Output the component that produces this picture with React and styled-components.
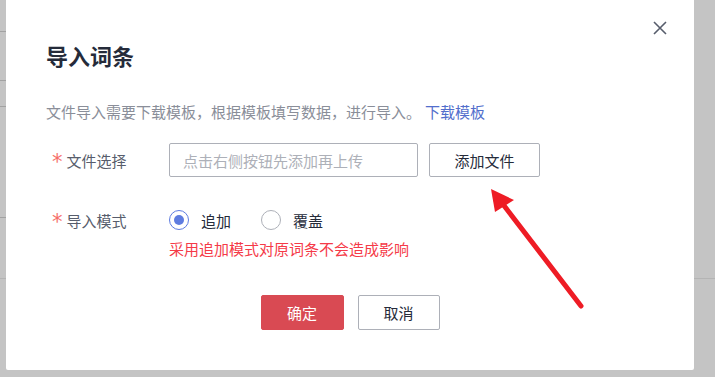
import React, { useState } from "react";
import styled, { createGlobalStyle } from "styled-components";

const Global = createGlobalStyle`
  html, body { margin: 0; padding: 0; }
  body {
    width: 715px;
    height: 377px;
    overflow: hidden;
    background: #c4c4c4;
    font-family: "Noto Sans CJK SC", "Noto Sans", sans-serif;
  }
`;

const Page = styled.div`
  position: relative;
  width: 715px;
  height: 377px;
  overflow: hidden;
  background: #c4c4c4;
`;

const Backdrop = styled.div`
  display: flex;
  flex-direction: column;
`;

const BackdropRow = styled.div`
  height: ${(p) => p.$h}px;
  box-sizing: border-box;
  border-bottom: 1px solid ${(p) => (p.$light ? "#b4b4b4" : "#a2a2a2")};
  width: ${(p) => (p.$wide ? "100%" : "20px")};
`;

const Dialog = styled.div`
  position: absolute;
  left: 6px;
  top: 0;
  width: 688px;
  height: 370px;
  background: #ffffff;
  border-radius: 0 0 2px 2px;
  box-sizing: border-box;
  padding: 40px 40px 0 40px;
  display: flex;
  flex-direction: column;
`;

const CloseButton = styled.button`
  position: absolute;
  top: 20px;
  right: 26px;
  width: 16px;
  height: 16px;
  padding: 0;
  border: none;
  background: transparent;
  display: flex;
  align-items: center;
  justify-content: center;
  cursor: pointer;
`;

const Title = styled.h2`
  margin: 0;
  font-size: 22px;
  line-height: 30px;
  font-weight: 700;
  color: #252b3a;
`;

const Desc = styled.p`
  margin: 31px 0 0 0;
  font-size: 15px;
  line-height: 22px;
  color: #8a8e99;
`;

const Link = styled.a`
  color: #526ecc;
  text-decoration: none;
  margin-left: 4px;
  cursor: pointer;
`;

const FormRow = styled.div`
  display: flex;
  align-items: center;
  margin-top: ${(p) => p.$mt}px;
  height: ${(p) => p.$h}px;
`;

const Label = styled.label`
  width: 123px;
  box-sizing: border-box;
  padding-left: 6px;
  display: flex;
  align-items: center;
  font-size: 15px;
  color: #575d6c;
  flex-shrink: 0;
`;

const Star = styled.span`
  color: #f66f6a;
  font-size: 21px;
  font-family: "DejaVu Sans", sans-serif;
  margin-right: 4px;
  line-height: 1;
  padding-top: 5px;
`;

const Input = styled.input`
  width: 249px;
  height: 34px;
  box-sizing: border-box;
  border: 1px solid #adb0b8;
  border-radius: 2px;
  padding: 0 13px;
  font-family: inherit;
  font-size: 15px;
  color: #252b3a;
  outline: none;
  &::placeholder { color: #adb0b8; }
`;

const Button = styled.button`
  height: ${(p) => p.$h || 34}px;
  width: ${(p) => p.$w}px;
  margin-left: ${(p) => p.$ml || 0}px;
  box-sizing: border-box;
  border-radius: 2px;
  font-family: inherit;
  font-size: 15px;
  cursor: pointer;
  padding: 0;
  border: 1px solid ${(p) => (p.$primary ? "#d94a53" : "#adb0b8")};
  background: ${(p) => (p.$primary ? "#d94a53" : "#ffffff")};
  color: ${(p) => (p.$primary ? "#ffffff" : "#252b3a")};
`;

const RadioGroup = styled.div`
  display: flex;
  align-items: center;
`;

const RadioItem = styled.label`
  display: flex;
  align-items: center;
  margin-right: 30px;
  font-size: 15px;
  color: #252b3a;
  cursor: pointer;
`;

const RadioCircle = styled.span`
  width: 20px;
  height: 20px;
  box-sizing: border-box;
  border-radius: 50%;
  border: 1px solid ${(p) => (p.$checked ? "#5e7ce0" : "#adb0b8")};
  display: flex;
  align-items: center;
  justify-content: center;
  margin-right: 12px;
  &::after {
    content: "";
    width: 10px;
    height: 10px;
    border-radius: 50%;
    background: #5e7ce0;
    display: ${(p) => (p.$checked ? "block" : "none")};
  }
`;

const Hint = styled.div`
  margin: 8px 0 0 123px;
  font-size: 15px;
  line-height: 22px;
  color: #f53a48;
`;

const Footer = styled.div`
  display: flex;
  justify-content: center;
  gap: 14px;
  margin-top: 35px;
`;

const Arrow = styled.svg`
  position: absolute;
  left: 0;
  top: 0;
  pointer-events: none;
`;

export default function App() {
  const [mode, setMode] = useState("append");
  return (
    <>
      <Global />
      <Page>
        <Backdrop>
          <BackdropRow $h={32} />
          <BackdropRow $h={49} />
          <BackdropRow $h={26} />
          <BackdropRow $h={111} />
          <BackdropRow $h={61} $wide $light />
        </Backdrop>
        <Dialog>
          <CloseButton aria-label="close">
            <svg width="14" height="14" viewBox="0 0 14 14">
              <path d="M1 1 L13 13 M13 1 L1 13" stroke="#575d6c" strokeWidth="1.6" />
            </svg>
          </CloseButton>
          <Title>导入词条</Title>
          <Desc>
            文件导入需要下载模板，根据模板填写数据，进行导入。
            <Link>下载模板</Link>
          </Desc>
          <FormRow $mt={20} $h={34}>
            <Label>
              <Star>*</Star>文件选择
            </Label>
            <Input placeholder="点击右侧按钮先添加再上传" />
            <Button $w={111} $ml={11}>添加文件</Button>
          </FormRow>
          <FormRow $mt={33} $h={20}>
            <Label>
              <Star>*</Star>导入模式
            </Label>
            <RadioGroup>
              <RadioItem onClick={() => setMode("append")}>
                <RadioCircle $checked={mode === "append"} />
                追加
              </RadioItem>
              <RadioItem onClick={() => setMode("cover")}>
                <RadioCircle $checked={mode === "cover"} />
                覆盖
              </RadioItem>
            </RadioGroup>
          </FormRow>
          <Hint>采用追加模式对原词条不会造成影响</Hint>
          <Footer>
            <Button $primary $w={83} $h={35}>确定</Button>
            <Button $w={82} $h={35}>取消</Button>
          </Footer>
        </Dialog>
        <Arrow width="715" height="377" viewBox="0 0 715 377">
          <line x1="581" y1="306" x2="502" y2="203" stroke="#ee1c25" strokeWidth="5" strokeLinecap="round" />
          <polygon points="491,189 514,200 495,212" fill="#ee1c25" />
        </Arrow>
      </Page>
    </>
  );
}
